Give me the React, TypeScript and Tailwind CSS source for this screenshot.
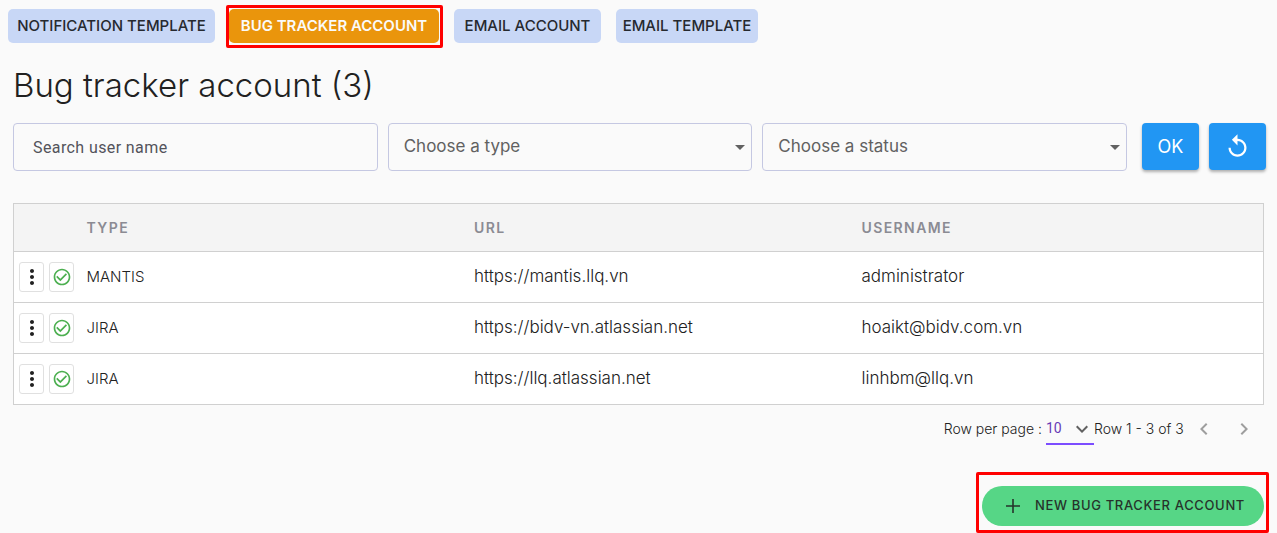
import type { ReactNode } from "react";

type Account = { type: string; url: string; username: string };

const accounts: Account[] = [
  { type: "MANTIS", url: "https://mantis.llq.vn", username: "administrator" },
  { type: "JIRA", url: "https://bidv-vn.atlassian.net", username: "hoaikt@bidv.com.vn" },
  { type: "JIRA", url: "https://llq.atlassian.net", username: "linhbm@llq.vn" },
];

function Icon({ d, className }: { d: string; className: string }) {
  return (
    <svg viewBox="0 0 24 24" fill="currentColor" aria-hidden="true" className={className}>
      <path d={d} />
    </svg>
  );
}

const icons = {
  dropdown: "M7 10l5 5 5-5z",
  replay: "M12 5V1L7 6l5 5V7c3.31 0 6 2.69 6 6s-2.69 6-6 6-6-2.69-6-6H4c0 4.42 3.58 8 8 8s8-3.58 8-8-3.58-8-8-8z",
  more: "M12 8c1.1 0 2-.9 2-2s-.9-2-2-2-2 .9-2 2 .9 2 2 2zm0 2c-1.1 0-2 .9-2 2s.9 2 2 2 2-.9 2-2-.9-2-2-2zm0 6c-1.1 0-2 .9-2 2s.9 2 2 2 2-.9 2-2-.9-2-2-2z",
  check:
    "M16.59 7.58L10 14.17l-3.59-3.58L5 12l5 5 8-8zM12 2C6.48 2 2 6.48 2 12s4.48 10 10 10 10-4.48 10-10S17.52 2 12 2zm0 18c-4.42 0-8-3.58-8-8s3.58-8 8-8 8 3.58 8 8-3.58 8-8 8z",
  expand: "M16.59 8.59L12 13.17 7.41 8.59 6 10l6 6 6-6z",
  left: "M15.41 7.41L14 6l-6 6 6 6 1.41-1.41L10.83 12z",
  right: "M10 6L8.59 7.41 13.17 12l-4.58 4.59L10 18l6-6z",
  add: "M19 12.8h-6.2V19h-1.6v-6.2H5v-1.6h6.2V5h1.6v6.2H19z",
};

function Tab({ children, className, active = false }: { children: ReactNode; className: string; active?: boolean }) {
  const tone = active ? "bg-[#ea950c] font-semibold text-[#fafafa]" : "mt-1 bg-[#c8d7f6] font-medium text-[#26292f]";
  return (
    <button
      type="button"
      aria-pressed={active}
      className={`h-[34px] rounded-[5px] text-center text-[15px] whitespace-nowrap ${tone} ${className}`}
    >
      {children}
    </button>
  );
}

function FilterSelect({ label, options }: { label: string; options: string[] }) {
  return (
    <div className="relative">
      <select
        aria-label={label}
        defaultValue=""
        className="h-12 w-full appearance-none rounded border border-[#c5c8e2] bg-transparent px-[15px] text-[17px] text-[#616161]"
      >
        <option value="">{label}</option>
        {options.map((option) => (
          <option key={option}>{option}</option>
        ))}
      </select>
      <Icon d={icons.dropdown} className="pointer-events-none absolute top-3 right-0 size-6 text-[#616161]" />
    </div>
  );
}

const actionButton =
  "flex h-[47px] w-[57px] items-center justify-center rounded bg-[#2196f3] text-lg text-white shadow-[0_2px_3px_rgba(0,0,0,0.3)]";
const rowButton = "flex h-[30px] w-[25px] items-center justify-center rounded-[3px] border border-[#e0e0e0] bg-white";
const headCell = "text-left text-sm font-semibold tracking-widest text-[#8b8b93]";

export default function App() {
  return (
    <main className="min-h-screen bg-[#fafafa] font-['Inter','Liberation_Sans',sans-serif] text-[#212121]">
      <nav aria-label="Settings" className="flex items-start pt-[5px] pl-2">
        <Tab className="w-[207px]">NOTIFICATION TEMPLATE</Tab>
        <div className="mx-[11px] rounded-[2px] border-3 border-[#ff0000] pt-px pr-px pb-[2px]">
          <Tab active className="block w-[210px]">
            BUG TRACKER ACCOUNT
          </Tab>
        </div>
        <Tab className="w-[147px]">EMAIL ACCOUNT</Tab>
        <Tab className="ml-[15px] w-[142px]">EMAIL TEMPLATE</Tab>
      </nav>

      <h1 className="mt-[13px] pl-[13px] text-[33px] leading-[48px] font-light">Bug tracker account (3)</h1>

      <form className="mt-[14px] flex gap-[15px] pr-[11px] pl-[13px]" onSubmit={(e) => e.preventDefault()}>
        <div className="grid flex-1 grid-cols-3 gap-[10px]">
          <input
            type="text"
            aria-label="Search user name"
            placeholder="Search user name"
            className="h-12 min-w-0 rounded border border-[#c5c8e2] bg-transparent px-[19px] font-['Roboto','Liberation_Sans',sans-serif] text-base font-normal tracking-wide placeholder:text-[#53535b]"
          />
          <FilterSelect label="Choose a type" options={["MANTIS", "JIRA"]} />
          <FilterSelect label="Choose a status" options={["Active", "Inactive"]} />
        </div>
        <div className="flex gap-[10px]">
          <button type="submit" className={actionButton}>
            OK
          </button>
          <button type="reset" aria-label="Reset" className={actionButton}>
            <Icon d={icons.replay} className="size-[27px]" />
          </button>
        </div>
      </form>

      <div className="mt-8 mr-[13px] ml-[13px]">
        <table className="w-full table-fixed border-collapse border border-[#d0d0d0]">
          <colgroup>
            <col className="w-[73px]" />
            <col className="w-[31%]" />
            <col className="w-[31%]" />
            <col />
          </colgroup>
          <thead>
            <tr className="h-12 bg-[#f4f4f4]">
              <td />
              <th scope="col" className={headCell}>TYPE</th>
              <th scope="col" className={headCell}>URL</th>
              <th scope="col" className={headCell}>USERNAME</th>
            </tr>
          </thead>
          <tbody>
            {accounts.map((account) => (
              <tr key={account.url} className="h-[51px] border-t border-[#d0d0d0] bg-white text-[17px] font-light">
                <td>
                  <div className="flex gap-[5px] pl-[5px]">
                    <button type="button" aria-label="More actions" className={rowButton}>
                      <Icon d={icons.more} className="size-6 shrink-0 text-[#212121]" />
                    </button>
                    <button type="button" aria-label="Active" className={rowButton}>
                      <Icon d={icons.check} className="size-5 shrink-0 text-[#4caf50]" />
                    </button>
                  </div>
                </td>
                <td className="text-[15px]">{account.type}</td>
                <td>{account.url}</td>
                <td>{account.username}</td>
              </tr>
            ))}
          </tbody>
        </table>
      </div>

      <div className="flex h-12 items-center justify-end pr-[21px] text-sm font-light">
        <label htmlFor="page-size">Row per page :</label>
        <div className="relative ml-1 w-12">
          <select
            id="page-size"
            defaultValue="10"
            className="block h-8 w-full appearance-none border-b-2 border-[#7c4dff] bg-transparent font-['Roboto','Liberation_Sans',sans-serif] text-sm font-normal text-[#673ab7]"
          >
            <option>10</option>
            <option>20</option>
            <option>50</option>
          </select>
          <Icon d={icons.expand} className="pointer-events-none absolute top-1 right-0 size-6 text-[#616161]" />
        </div>
        <span className="w-[90px] whitespace-nowrap">Row 1 - 3 of 3</span>
        <button type="button" aria-label="Previous page" className="ml-2 text-[#9e9e9e]">
          <Icon d={icons.left} className="size-6" />
        </button>
        <button type="button" aria-label="Next page" className="ml-4 text-[#9e9e9e]">
          <Icon d={icons.right} className="size-6" />
        </button>
      </div>

      <div className="mt-[19px] flex justify-end pr-2">
        <div className="rounded-[2px] border-3 border-[#ff0000] pt-[11px] pr-[2px] pb-1 pl-[3px]">
          <button
            type="button"
            className="flex h-10 w-[282px] items-center justify-center gap-[10px] rounded-full bg-[#56d686] text-[13px] font-medium tracking-wider whitespace-nowrap text-[#26332b]"
          >
            <Icon d={icons.add} className="size-6" />
            NEW BUG TRACKER ACCOUNT
          </button>
        </div>
      </div>
    </main>
  );
}
